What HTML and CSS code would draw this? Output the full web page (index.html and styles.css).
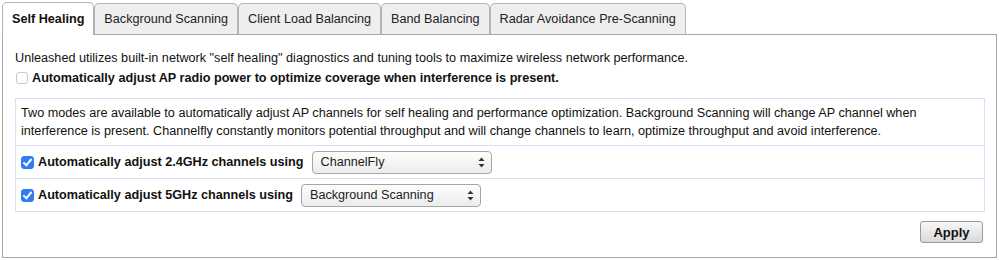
FILE: index.html
```html
<!DOCTYPE html>
<html>
<head>
<meta charset="utf-8">
<link rel="stylesheet" href="styles.css">
</head>
<body>
<div class="wrap">
  <div class="tabs">
    <div class="tab active">Self Healing</div>
    <div class="tab">Background Scanning</div>
    <div class="tab">Client Load Balancing</div>
    <div class="tab">Band Balancing</div>
    <div class="tab">Radar Avoidance Pre-Scanning</div>
  </div>
  <div class="panel">
    <p class="intro">Unleashed utilizes built-in network "self healing" diagnostics and tuning tools to maximize wireless network performance.</p>
    <label class="opt"><input type="checkbox" class="cb"><span>Automatically adjust AP radio power to optimize coverage when interference is present.</span></label>
    <div class="box">
      <p class="desc">Two modes are available to automatically adjust AP channels for self healing and performance optimization. Background Scanning will change AP channel when interference is present. Channelfly constantly monitors potential throughput and will change channels to learn, optimize throughput and avoid interference.</p>
      <div class="row">
        <label class="opt"><input type="checkbox" class="cb" checked><span>Automatically adjust 2.4GHz channels using</span></label>
        <span class="sel">
          <select><option>ChannelFly</option><option>Background Scanning</option></select>
          <svg class="arrows" width="7" height="11" viewBox="0 0 7 11"><path d="M3.5 0.5 L6.5 4 L0.5 4 Z M3.5 10.5 L6.5 7 L0.5 7 Z" fill="#333"/></svg>
        </span>
      </div>
      <div class="row">
        <label class="opt"><input type="checkbox" class="cb" checked><span>Automatically adjust 5GHz channels using</span></label>
        <span class="sel">
          <select><option>Background Scanning</option><option>ChannelFly</option></select>
          <svg class="arrows" width="7" height="11" viewBox="0 0 7 11"><path d="M3.5 0.5 L6.5 4 L0.5 4 Z M3.5 10.5 L6.5 7 L0.5 7 Z" fill="#333"/></svg>
        </span>
      </div>
    </div>
    <div class="actions"><button class="apply">Apply</button></div>
  </div>
</div>
</body>
</html>
```
FILE: styles.css
```css
html, body {
  margin: 0;
  padding: 0;
  background: #fff;
}
body {
  font-family: "Liberation Sans", Arial, Helvetica, sans-serif;
  font-size: 12.65px;
  color: #111;
}
.wrap {
  padding: 2px 2px 0 2px;
}
.tabs {
  display: flex;
  align-items: flex-end;
  height: 32px;
  position: relative;
  z-index: 1;
}
.tab {
  box-sizing: border-box;
  height: 31px;
  line-height: 30px;
  padding: 0 9px;
  border: 1px solid #b4b4b4;
  border-bottom: none;
  border-radius: 5px 5px 0 0;
  background: #eeeeee;
  color: #222;
  font-size: 12.65px;
}
.tab.active {
  height: 33px;
  margin-bottom: -1px;
  padding: 0 9px 0 9px;
  background: #fff;
  font-weight: bold;
  line-height: 32px;
  color: #111;
}
.panel {
  box-sizing: border-box;
  height: 224px;
  border: 1px solid #a8a8a8;
  padding: 0 11px 0 12px;
  display: flex;
  flex-direction: column;
}
.intro {
  margin: 14px 0 0 0;
  line-height: 18px;
}
.opt {
  display: flex;
  align-items: center;
  font-weight: bold;
}
.panel > .opt {
  margin-top: 2px;
  height: 18px;
}
.cb {
  appearance: none;
  -webkit-appearance: none;
  box-sizing: border-box;
  width: 12px;
  height: 12px;
  margin: 0 4px 0 1px;
  border: 1px solid #c8c8c8;
  border-radius: 3px;
  background: #fff;
  position: relative;
  flex: none;
}
.row .cb {
  width: 13px;
  height: 13px;
  margin-left: 0;
}
.cb:checked {
  background: #2e7cf6;
  border-color: #2e7cf6;
}
.cb:checked::after {
  content: "";
  position: absolute;
  left: 3px;
  top: 0px;
  width: 3px;
  height: 7px;
  border: solid #fff;
  border-width: 0 2px 2px 0;
  transform: rotate(40deg);
}
.box {
  margin-top: 11px;
  border: 1px solid #e0dbf7;
}
.desc {
  margin: 0;
  padding: 5px 5px 5px 5px;
  line-height: 18px;
}
.row {
  display: flex;
  align-items: center;
  height: 32px;
  border-top: 1px solid #e0dbf7;
  padding-left: 5px;
  gap: 8px;
}
.sel {
  position: relative;
  display: inline-flex;
}
select {
  appearance: none;
  -webkit-appearance: none;
  box-sizing: border-box;
  width: 180px;
  height: 23px;
  padding: 0 20px 0 8px;
  border: 1px solid #a5a5a5;
  border-radius: 4px;
  background: linear-gradient(#fdfdfd, #ececec);
  font-family: "Liberation Sans", Arial, sans-serif;
  font-size: 12.65px;
  color: #222;
}
.arrows {
  position: absolute;
  right: 7px;
  top: 6px;
  pointer-events: none;
}
.actions {
  display: flex;
  justify-content: flex-end;
  margin-top: 9px;
  padding-right: 2px;
}
.apply {
  box-sizing: border-box;
  width: 63px;
  height: 22px;
  border: 1px solid #9a9a9a;
  border-radius: 3px;
  background: linear-gradient(#f7f7f7, #d9d9d9);
  font-family: "Liberation Sans", Arial, sans-serif;
  font-weight: bold;
  font-size: 13px;
  color: #111;
  padding: 0;
}
```
